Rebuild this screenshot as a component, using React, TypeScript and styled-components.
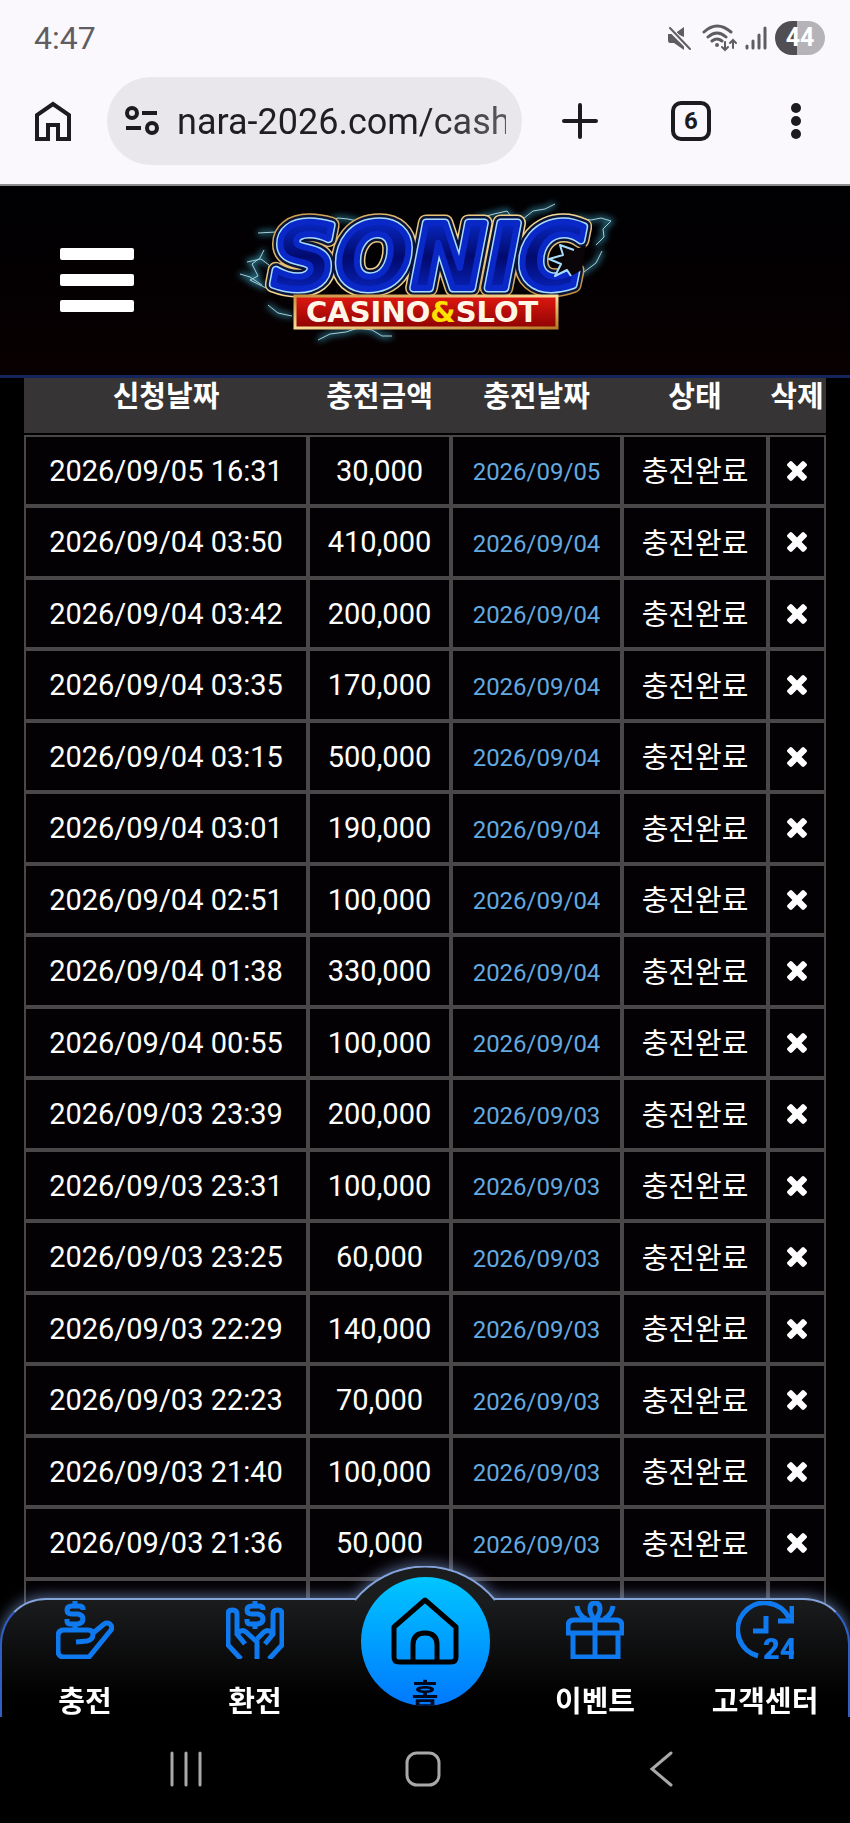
import React from "react";
import styled, { createGlobalStyle } from "styled-components";

interface IDeposit {
  requested: string;
  amount: string;
  charged: string;
}

const deposits: IDeposit[] = [
  { requested: "2026/09/05 16:31", amount: "30,000", charged: "2026/09/05" },
  { requested: "2026/09/04 03:50", amount: "410,000", charged: "2026/09/04" },
  { requested: "2026/09/04 03:42", amount: "200,000", charged: "2026/09/04" },
  { requested: "2026/09/04 03:35", amount: "170,000", charged: "2026/09/04" },
  { requested: "2026/09/04 03:15", amount: "500,000", charged: "2026/09/04" },
  { requested: "2026/09/04 03:01", amount: "190,000", charged: "2026/09/04" },
  { requested: "2026/09/04 02:51", amount: "100,000", charged: "2026/09/04" },
  { requested: "2026/09/04 01:38", amount: "330,000", charged: "2026/09/04" },
  { requested: "2026/09/04 00:55", amount: "100,000", charged: "2026/09/04" },
  { requested: "2026/09/03 23:39", amount: "200,000", charged: "2026/09/03" },
  { requested: "2026/09/03 23:31", amount: "100,000", charged: "2026/09/03" },
  { requested: "2026/09/03 23:25", amount: "60,000", charged: "2026/09/03" },
  { requested: "2026/09/03 22:29", amount: "140,000", charged: "2026/09/03" },
  { requested: "2026/09/03 22:23", amount: "70,000", charged: "2026/09/03" },
  { requested: "2026/09/03 21:40", amount: "100,000", charged: "2026/09/03" },
  { requested: "2026/09/03 21:36", amount: "50,000", charged: "2026/09/03" },
];

const StatusIcons: React.FC = () => (
  <svg width="100" height="34" viewBox="668 21 100 34" fill="none" aria-hidden>
    <path d="M668 34h6l10-7v10l-7-3 7 7v9l-10-7h-4q-2 0-2-3z" fill="#5f5d62" />
    <path d="M670 29l20 20" stroke="#faf8fd" strokeWidth="5" />
    <g stroke="#5f5d62" strokeWidth="2" strokeLinecap="round">
      <path d="M670 28l20 21" />
      <path d="M704 32q13-12 27 0M708 37q9-8 18 0M712 41q5-4 10 0" strokeWidth="3" />
      <path d="M725 42v8m-3-3l3 3 3-3M733 48v-8m-3 3l3-3 3 3" />
      <path d="M747 46v2M753 41v7M759 35v13M765 28v20" strokeWidth="3" />
    </g>
    <circle cx="717" cy="45" r="2" fill="#5f5d62" />
  </svg>
);

const Dollar: React.FC<{ x: number }> = ({ x }) => (
  <path
    transform={`translate(${x} 0)`}
    d="M8 9V8q0-3-4-3H-3q-5 0-5 4t5 4H3q5 1 5 5t-5 5H-4q-4 0-4-3V18M0 0v4M0 23v5"
  />
);

const ChargeIcon: React.FC = () => (
  <IconSvg viewBox="0 0 58 58">
    <Dollar x={19} />
    <path d="M36 33L48 23q3-2 6 0 3 3 1 6L33 56H8q-6 0-6-6V35q0-6 6-6H32q5 0 5 4 0 6-6 7L20 41" />
  </IconSvg>
);

const WithdrawIcon: React.FC = () => (
  <IconSvg viewBox="0 0 58 58">
    <Dollar x={29} />
    <path d="M15 58L2 44V13q0-4 4.500-4t4.500 4V33L19 43M12 32q4-4 8-1L31 41V58" />
    <path d="M43 58L56 44V13q0-4-4.500-4t-4.500 4V33L39 43M46 32q-4-4-8-1L31 38" />
  </IconSvg>
);

const GiftIcon: React.FC = () => (
  <IconSvg viewBox="0 0 58 58">
    <path d="M7 33V56H52V33M2 32V25q0-6 6-6H50q6 0 6 6v7zM29 19V56" />
    <path d="M29 19q-5-6-5-11 0-6 5-6t5 6q0 5-5 11M11 5q1 9 9 13M47 5q-1 9-9 13" />
  </IconSvg>
);

const SupportIcon: React.FC = () => (
  <IconSvg viewBox="0 0 58 58">
    <path d="M22 55A27 27 0 1 1 53 17M56 5V20H42M30 15V30H17" />
    <text x="27" y="58" fontFamily="Roboto" fontSize="29" fontWeight="900" fill="#0f7af0" stroke="none">
      24
    </text>
  </IconSvg>
);

const HomeIcon: React.FC = () => (
  <svg width="68" height="68" viewBox="0 0 68 68" fill="none" stroke="#000" strokeWidth="5" strokeLinejoin="round" aria-hidden>
    <path d="M34 3L65 30V60q0 5-5 5H8q-5 0-5-5V30zM22 65V48q0-12 12-12t12 12V65" />
  </svg>
);

const Logo: React.FC = () => (
  <LogoSvg viewBox="-5 -4 400 189" role="img" aria-label="SONIC CASINO&SLOT">
    <defs>
      <linearGradient id="letter" x1="0" y1="0" x2="0" y2="1">
        <stop offset="0" stopColor="#0a35e8" />
        <stop offset="0.5" stopColor="#020a6e" />
        <stop offset="1" stopColor="#0a2fe0" />
      </linearGradient>
      <linearGradient id="gold" x1="0" y1="0" x2="1" y2="1">
        <stop offset="0" stopColor="#c8923e" />
        <stop offset="0.5" stopColor="#f8dc98" />
        <stop offset="1" stopColor="#b87a28" />
      </linearGradient>
      <linearGradient id="banner" x1="0" y1="0" x2="0" y2="1">
        <stop offset="0" stopColor="#e01810" />
        <stop offset="1" stopColor="#8e0303" />
      </linearGradient>
      <filter id="glow" x="-20%" y="-20%" width="140%" height="140%">
        <feGaussianBlur stdDeviation="3" />
      </filter>
    </defs>
    {[true, false].map((soft) => (
      <g
        key={String(soft)}
        fill="none"
        stroke={soft ? "#2f7f98" : "#a8d0d8"}
        strokeWidth={soft ? 4 : 1}
        filter={soft ? "url(#glow)" : undefined}
      >
        <path d="M235 34l14-6 15-4 13-3 6 8 10 0 10-8 12-2 10-5M335 32l12-4 14 2 10-2 10 3-8 8 1 8-8 8" />
        <path d="M100 31l8-3 10 1 14 3M28 43l18-1M10 84l10 3 12 8M17 72l14-3 8 6M34 60l-4 8-8 6 6 12-8 4 16 8" />
        <path d="M38 115l10 8 14 3M88 150l12-6 16-2 12-4 14 2 10 6 10 0M350 85l16-12 6-12" />
      </g>
    ))}
    <g strokeLinejoin="round">
      <use href="#wordmark" stroke="url(#gold)" strokeWidth="17" />
      <use href="#wordmark" stroke="#0a1438" strokeWidth="14" />
      <use href="#wordmark" stroke="#a8dcff" strokeWidth="9" />
      <g fill="url(#letter)" stroke="#0a28c8" strokeWidth="6">
        <Wordmark id="wordmark" x="42" y="98">SONIC</Wordmark>
      </g>
      <path d="M356 55L344 60 330 55 333 65 319 69 331 74 325 86 337 80 341 86 352 80z" fill="#0a0508" />
      <path
        d="M344 60L330 55 333 65 319 69 331 74 325 86 337 80 341 86"
        fill="none"
        stroke="#a8dcff"
        strokeWidth="2"
      />
    </g>
    <rect x="65" y="106" width="262" height="32" fill="url(#banner)" stroke="url(#gold)" strokeWidth="3" />
    <Tagline x="76" y="132">
      CASINO<tspan fill="#ffe000">&amp;</tspan>SLOT
    </Tagline>
  </LogoSvg>
);

const App: React.FC = () => {
  return (
    <Screen>
      <GlobalStyle />
      <StatusBar>
        <span>4:47</span>
        <div>
          <StatusIcons />
          <Battery>44</Battery>
        </div>
      </StatusBar>
      <Toolbar>
        <BarButton aria-label="Home">
          <svg width="38" height="40" viewBox="0 0 38 40" fill="none" stroke="#1c1b1f" strokeWidth="4">
            <path d="M3 38V14L19 3 35 14V38H24V24H14V38z" />
          </svg>
        </BarButton>
        <AddressBar>
          <svg width="34" height="30" viewBox="0 0 34 30" fill="none" stroke="#1c1b1f" strokeWidth="4" aria-hidden>
            <circle cx="7" cy="7" r="5" />
            <circle cx="27" cy="22" r="5" />
            <path d="M17 7h15M1 22h15" />
          </svg>
          <input aria-label="Address" readOnly value="nara-2026.com/cash" />
        </AddressBar>
        <BarButton aria-label="New tab">
          <svg width="38" height="38" viewBox="0 0 38 38" stroke="#1c1b1f" strokeWidth="4" strokeLinecap="round">
            <path d="M19 3v32M3 19h32" />
          </svg>
        </BarButton>
        <TabCount aria-label="Tabs">6</TabCount>
        <BarButton aria-label="Menu">
          <svg width="10" height="38" viewBox="0 0 10 38" fill="#1c1b1f">
            <circle cx="5" cy="6" r="5" />
            <circle cx="5" cy="19" r="5" />
            <circle cx="5" cy="32" r="5" />
          </svg>
        </BarButton>
      </Toolbar>
      <SiteHeader>
        <MenuButton aria-label="메뉴">
          <i />
          <i />
          <i />
        </MenuButton>
        <Logo />
      </SiteHeader>
      <WebView>
        <DepositTable>
          <colgroup>
            <col width="284" />
            <col width="143" />
            <col width="171" />
            <col width="146" />
            <col width="58" />
          </colgroup>
          <thead>
            <tr>
              <th>신청날짜</th>
              <th>충전금액</th>
              <th>충전날짜</th>
              <th>상태</th>
              <th>삭제</th>
            </tr>
          </thead>
          <tbody>
            {deposits.map((deposit) => (
              <tr key={deposit.requested}>
                <td>{deposit.requested}</td>
                <td>{deposit.amount}</td>
                <ChargedCell>{deposit.charged}</ChargedCell>
                <StatusCell>충전완료</StatusCell>
                <td>
                  <DeleteButton aria-label="삭제">
                    <svg width="20" height="20" viewBox="302 366 1188 1188" fill="#fff">
                      <path d="M1490 1322q0 40-28 68l-136 136q-28 28-68 28t-68-28l-294-294-294 294q-28 28-68 28t-68-28l-136-136q-28-28-28-68t28-68l294-294-294-294q-28-28-28-68t28-68l136-136q28-28 68-28t68 28l294 294 294-294q28-28 68-28t68 28l136 136q28 28 28 68t-28 68l-294 294 294 294q28 28 28 68z" />
                    </svg>
                  </DeleteButton>
                </td>
              </tr>
            ))}
            <tr>
              <td />
              <td />
              <td />
              <td />
              <td />
            </tr>
          </tbody>
        </DepositTable>
        <BottomNav>
          <NavShape>
            <svg width="144" height="36" viewBox="0 0 144 36">
              <path d="M2 36V34A90 90 0 0 1 142 34V36z" fill="#1b1c1e" />
              <path d="M2 34A90 90 0 0 1 142 34" fill="none" stroke="#86a4dc" strokeWidth="2" />
            </svg>
          </NavShape>
          <NavLink href="#charge">
            <ChargeIcon />
            충전
          </NavLink>
          <NavLink href="#withdraw">
            <WithdrawIcon />
            환전
          </NavLink>
          <HomeLink href="#home">
            <HomeIcon />
            홈
          </HomeLink>
          <NavLink href="#event">
            <GiftIcon />
            이벤트
          </NavLink>
          <NavLink href="#support">
            <SupportIcon />
            고객센터
          </NavLink>
        </BottomNav>
      </WebView>
      <SystemNav>
        <button aria-label="Recents">
          <svg width="36" height="38" viewBox="0 0 36 38">
            <path d="M4 3v32M18 3v32M32 3v32" />
          </svg>
        </button>
        <button aria-label="Home">
          <svg width="38" height="38" viewBox="0 0 38 38">
            <rect x="3" y="3" width="32" height="32" rx="10" />
          </svg>
        </button>
        <button aria-label="Back">
          <svg width="24" height="38" viewBox="0 0 24 38">
            <path d="M22 3L3 19l19 16" />
          </svg>
        </button>
      </SystemNav>
    </Screen>
  );
};

export default App;

const GlobalStyle = createGlobalStyle`
  * {
    box-sizing: border-box;
  }
  body {
    margin: 0;
    background: #000;
    font-family: Roboto, "Noto Sans CJK KR", sans-serif;
  }
  button {
    border: 0;
    padding: 0;
    background: none;
  }
  svg {
    display: block;
    flex: none;
  }
`;

const Screen = styled.div`
  display: flex;
  flex-direction: column;
  height: 100vh;
`;

const StatusBar = styled.div`
  display: flex;
  align-items: center;
  justify-content: space-between;
  height: 77px;
  padding: 0 25px 2px 34px;
  background: #faf8fd;
  color: #5f5d62;
  font-size: 32px;
  div {
    display: flex;
    align-items: center;
    gap: 7px;
  }
`;

const Battery = styled.b`
  width: 50px;
  border-radius: 17px;
  background: linear-gradient(90deg, #504e53 44%, #b5b3b8 44%);
  color: #fff;
  font-size: 25px;
  line-height: 34px;
  text-align: center;
`;

const Toolbar = styled.div`
  display: flex;
  align-items: center;
  height: 109px;
  padding: 0 49px 20px 34px;
  border-bottom: 2px solid #8d8b90;
  background: #faf8fd;
`;

const BarButton = styled.button`
  flex: none;
`;

const AddressBar = styled.label`
  display: flex;
  flex: 1;
  align-items: center;
  gap: 18px;
  min-width: 0;
  height: 88px;
  margin: 0 39px 0 35px;
  padding: 0 16px 0 18px;
  border-radius: 44px;
  background: #e9e7ec;
  input {
    flex: 1;
    min-width: 0;
    padding: 2px 0 0;
    border: 0;
    background: none;
    color: #1f1e22;
    font: 36px Roboto, sans-serif;
    mask-image: linear-gradient(90deg, #000 74%, rgba(0, 0, 0, 0.7));
  }
`;

const TabCount = styled.button`
  flex: none;
  width: 40px;
  height: 40px;
  margin: 0 80px 0 72px;
  border: 4px solid #1c1b1f;
  border-radius: 10px;
  color: #1c1b1f;
  font: bold 24px Roboto, sans-serif;
`;

const SiteHeader = styled.header`
  display: grid;
  grid-template-columns: 1fr auto 1fr;
  align-items: center;
  height: 192px;
  border-bottom: 3px solid #14245c;
  background: linear-gradient(#000003, #080001);
`;

const MenuButton = styled.button`
  display: grid;
  gap: 14px;
  width: 74px;
  margin: 0 0 2px 60px;
  i {
    height: 12px;
    border-radius: 2px;
    background: #fff;
  }
`;

const LogoSvg = styled.svg`
  width: 400px;
  height: 189px;
`;

const Wordmark = styled.text`
  font: italic bold 89px "DejaVu Sans", sans-serif;
`;

const Tagline = styled.text`
  fill: #fff6e8;
  font: 900 29px "DejaVu Sans", sans-serif;
`;

const WebView = styled.main`
  position: relative;
  flex: 1;
  min-height: 0;
  overflow: hidden;
  padding: 0 24px;
  background: #000;
`;

const DepositTable = styled.table`
  width: 100%;
  table-layout: fixed;
  border-collapse: separate;
  border-spacing: 0;
  color: #fff;
  font-size: 29px;
  text-align: center;
  th {
    height: 57px;
    padding: 0 0 18px;
    border-bottom: 2px solid #000;
    background: #373436;
    line-height: 32px;
    white-space: nowrap;
  }
  td {
    height: 71px;
    padding: 0;
    border: 2px solid #4a4749;
    background: #040104;
    line-height: 40px;
  }
  tr:nth-child(even) td {
    height: 72px;
  }
`;

const StatusCell = styled.td`
  && {
    padding-top: 3px;
  }
`;

const ChargedCell = styled(StatusCell)`
  color: #63aae0;
  font-size: 24px;
`;

const DeleteButton = styled.button`
  display: block;
  margin: 0 auto;
`;

const BottomNav = styled.nav`
  position: absolute;
  right: 0;
  bottom: 0;
  left: 0;
  display: grid;
  grid-template-columns: repeat(5, 1fr);
  height: 119px;
`;

/* bar outline with the bump behind the home button */
const NavShape = styled.div`
  position: absolute;
  inset: 0;
  border: 2px solid #2f5fc4;
  border-top-color: #86a4dc;
  border-bottom: 0;
  border-radius: 46px 46px 0 0;
  background: linear-gradient(#1b1c1e, #000 85%);
  filter: drop-shadow(0 -2px 7px rgba(130, 165, 225, 0.6));
  svg {
    position: absolute;
    top: -34px;
    left: calc(50% - 72px);
  }
`;

const IconSvg = styled.svg`
  width: 58px;
  height: 58px;
  fill: none;
  stroke: #0f7af0;
  stroke-width: 5px;
`;

const NavLink = styled.a`
  position: relative;
  display: flex;
  flex-direction: column;
  align-items: center;
  gap: 28px;
  padding-top: 3px;
  color: #fff;
  font-size: 29px;
  font-weight: bold;
  line-height: 30px;
  text-decoration: none;
  white-space: nowrap;
`;

const HomeLink = styled(NavLink)`
  justify-self: center;
  gap: 15px;
  width: 129px;
  height: 129px;
  margin-top: -21px;
  padding-top: 20px;
  border-radius: 50%;
  background: linear-gradient(#00c6ff, #0078ff);
  color: #000820;
  overflow: hidden;
`;

const SystemNav = styled.footer`
  display: grid;
  flex: none;
  grid-template-columns: repeat(3, 1fr);
  height: 106px;
  padding: 0 70px 2px 67px;
  background: #000;
  button {
    display: grid;
    place-items: center;
  }
  svg {
    fill: none;
    stroke: #a9a9a9;
    stroke-width: 3px;
    stroke-linecap: round;
  }
`;
